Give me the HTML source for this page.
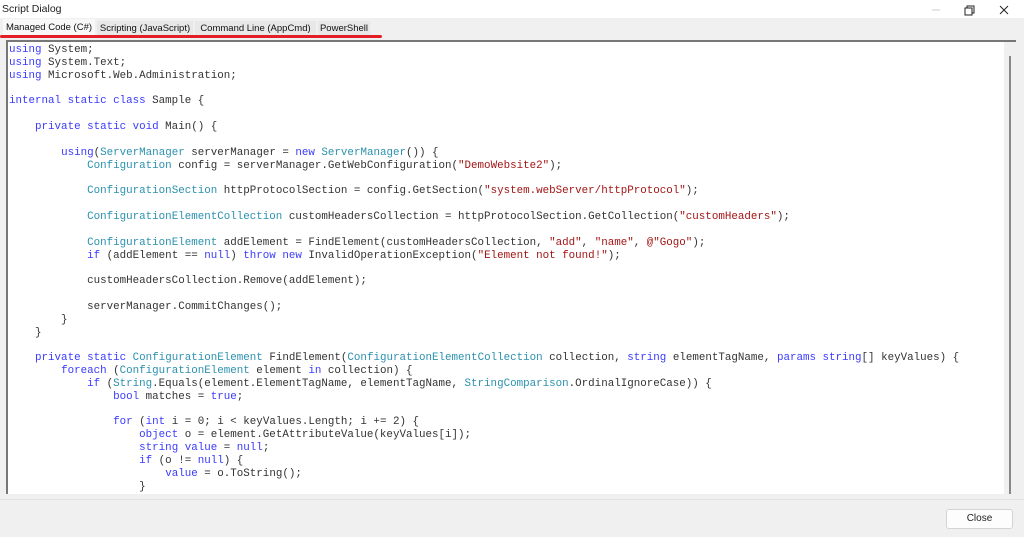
<!DOCTYPE html><html><head><style>
body{margin:0;width:1024px;height:537px;background:#f0f0f0;position:relative;overflow:hidden;font-family:"Liberation Sans",sans-serif}
#title{position:absolute;left:0;top:0;width:1024px;height:18px;background:#fff;font-size:10.5px;color:#222}
#title span{position:absolute;left:2px;top:3px}
#tabs{position:absolute;left:0;top:18px;height:20px;width:1024px;background:#f0f0f0}
.tab{position:absolute;top:3px;height:16px;font-size:9.5px;color:#111;background:#e8e8e8;line-height:16px;white-space:nowrap;text-align:center;overflow:hidden}
#red{position:absolute;left:0;top:35px;width:382px;height:3px;background:#e41e26;border-radius:2px}
#code{position:absolute;left:6px;top:40px;width:1010px;height:454px;background:#fff;border-left:2px solid #777;border-top:2px solid #777;box-sizing:border-box;overflow:hidden}
pre{margin:0;position:absolute;left:1px;top:2px;font-family:"Liberation Mono",monospace;font-size:10.85px;line-height:12.85px;color:#333}
.k{color:#3a3aff}.t{color:#2b91af}.s{color:#a31515}
#sb{position:absolute;right:0;top:0;width:12px;height:100%;background:#f0f0f0}
#thumb{position:absolute;right:5px;top:14px;width:2px;height:440px;background:#888}
#btn{position:absolute;left:946px;top:509px;width:67px;height:20px;background:#fdfdfd;border:1px solid #d4d4d4;border-radius:3px;box-sizing:border-box;font-size:10px;text-align:center;line-height:18px;color:#222}
</style></head><body>
<div id="title"><span>Script Dialog</span>
<svg style="position:absolute;left:920px;top:2px" width="100" height="16"><line x1="12" y1="8" x2="20" y2="8" stroke="#ccc"/><rect x="45" y="6" width="7" height="7" fill="none" stroke="#222"/><path d="M47 6V4h7v7h-2" fill="none" stroke="#222"/><path d="M80 4l8 8M88 4l-8 8" stroke="#222"/></svg></div>
<div id="tabs">
<div class="tab" style="left:3px;width:92px;top:1px;height:18px;background:#f8f8f8;line-height:18px">Managed Code (C#)</div>
<div class="tab" style="left:97px;width:96px">Scripting (JavaScript)</div>
<div class="tab" style="left:195px;width:121px">Command Line (AppCmd)</div>
<div class="tab" style="left:318px;width:52px">PowerShell</div>
</div>
<div id="red"></div>
<div id="code"><pre><span class="k">using</span> System;
<span class="k">using</span> System.Text;
<span class="k">using</span> Microsoft.Web.Administration;

<span class="k">internal static class</span> Sample {

    <span class="k">private static void</span> Main() {

        <span class="k">using</span>(<span class="t">ServerManager</span> serverManager = <span class="k">new</span> <span class="t">ServerManager</span>()) {
            <span class="t">Configuration</span> config = serverManager.GetWebConfiguration(<span class="s">"DemoWebsite2"</span>);

            <span class="t">ConfigurationSection</span> httpProtocolSection = config.GetSection(<span class="s">"system.webServer/httpProtocol"</span>);

            <span class="t">ConfigurationElementCollection</span> customHeadersCollection = httpProtocolSection.GetCollection(<span class="s">"customHeaders"</span>);

            <span class="t">ConfigurationElement</span> addElement = FindElement(customHeadersCollection, <span class="s">"add"</span>, <span class="s">"name"</span>, <span class="s">@"Gogo"</span>);
            <span class="k">if</span> (addElement == <span class="k">null</span>) <span class="k">throw new</span> InvalidOperationException(<span class="s">"Element not found!"</span>);

            customHeadersCollection.Remove(addElement);

            serverManager.CommitChanges();
        }
    }

    <span class="k">private static</span> <span class="t">ConfigurationElement</span> FindElement(<span class="t">ConfigurationElementCollection</span> collection, <span class="k">string</span> elementTagName, <span class="k">params string</span>[] keyValues) {
        <span class="k">foreach</span> (<span class="t">ConfigurationElement</span> element <span class="k">in</span> collection) {
            <span class="k">if</span> (<span class="t">String</span>.Equals(element.ElementTagName, elementTagName, <span class="t">StringComparison</span>.OrdinalIgnoreCase)) {
                <span class="k">bool</span> matches = <span class="k">true</span>;

                <span class="k">for</span> (<span class="k">int</span> i = 0; i &lt; keyValues.Length; i += 2) {
                    <span class="k">object</span> o = element.GetAttributeValue(keyValues[i]);
                    <span class="k">string value</span> = <span class="k">null</span>;
                    <span class="k">if</span> (o != <span class="k">null</span>) {
                        <span class="k">value</span> = o.ToString();
                    }</pre>
<div id="sb"><div id="thumb"></div></div></div>
<div style="position:absolute;left:0;top:499px;width:1024px;height:1px;background:#e2e2e2"></div>
<div id="btn">Close</div>
</body></html>
